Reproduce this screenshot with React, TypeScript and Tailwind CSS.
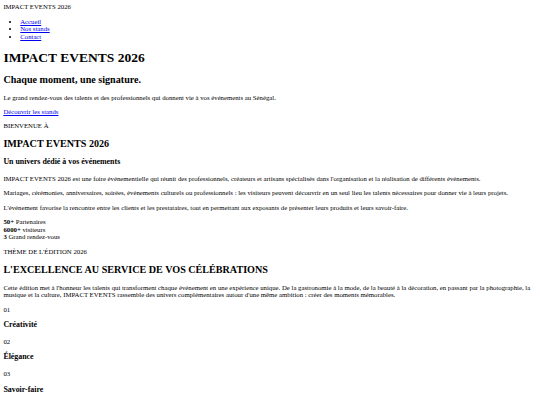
import React from 'react';

const NAV = ['Accueil', 'Nos stands', 'Contact'];

const STATS = [
  { n: '50+', label: 'Partenaires' },
  { n: '6000+', label: 'visiteurs' },
  { n: '3', label: 'Grand rendez-vous' },
];

const VALUES = [
  { n: '01', title: 'Créativité' },
  { n: '02', title: 'Élégance' },
  { n: '03', title: 'Savoir-faire' },
];

const h1 = 'text-[13.5px] leading-[15.3px] font-bold my-[9.05px]';
const h2 = 'text-[10.125px] leading-[11.5px] font-bold my-[8.4px]';
const h3 = 'text-[7.9px] leading-[8.9px] font-bold my-[7.9px]';
const p = 'my-[6.75px]';
const link = 'text-[#0000EE] underline';

export default function App() {
  return (
    <div className="bg-white text-black font-['Liberation_Serif',serif] text-[6.75px] leading-[7.6px] p-[3.375px]">
      <header>
        <div>IMPACT EVENTS 2026</div>
        <nav>
          <ul className="list-disc my-[6.75px] pl-[16.875px]">
            {NAV.map(n => (
              <li key={n}><a href="#" className={link}>{n}</a></li>
            ))}
          </ul>
        </nav>
      </header>

      <main>
        {/* Hero */}
        <section>
          <h1 className={h1}>IMPACT EVENTS 2026</h1>
          <h2 className={h2}>Chaque moment, une signature.</h2>
          <p className={p}>Le grand rendez-vous des talents et des professionnels qui donnent vie à vos événements au Sénégal.</p>
          <div><a href="#" className={link}>Découvrir les stands</a></div>
        </section>

        {/* A propos */}
        <section>
          <p className={p}>BIENVENUE À</p>
          <h2 className={h2}>IMPACT EVENTS 2026</h2>
          <h3 className={h3}>Un univers dédié à vos événements</h3>
          <p className={p}>IMPACT EVENTS 2026 est une foire événementielle qui réunit des professionnels, créateurs et artisans spécialisés dans l'organisation et la réalisation de différents événements.</p>
          <p className={p}>Mariages, cérémonies, anniversaires, soirées, événements culturels ou professionnels : les visiteurs peuvent découvrir en un seul lieu les talents nécessaires pour donner vie à leurs projets.</p>
          <p className={p}>L'événement favorise la rencontre entre les clients et les prestataires, tout en permettant aux exposants de présenter leurs produits et leurs savoir-faire.</p>
          <div>
            {STATS.map(s => (
              <div key={s.n}><strong className="font-bold">{s.n}</strong> {s.label}</div>
            ))}
          </div>
        </section>

        {/* Theme */}
        <section>
          <p className={p}>THÈME DE L'ÉDITION 2026</p>
          <h2 className={h2}>L'EXCELLENCE AU SERVICE DE VOS CÉLÉBRATIONS</h2>
          <p className={p}>Cette édition met à l'honneur les talents qui transforment chaque événement en une expérience unique. De la gastronomie à la mode, de la beauté à la décoration, en passant par la photographie, la musique et la culture, IMPACT EVENTS rassemble des univers complémentaires autour d'une même ambition : créer des moments mémorables.</p>
          {VALUES.map(v => (
            <div key={v.n}>
              <p className={p}>{v.n}</p>
              <h3 className={h3}>{v.title}</h3>
            </div>
          ))}
        </section>
      </main>
    </div>
  );
}
